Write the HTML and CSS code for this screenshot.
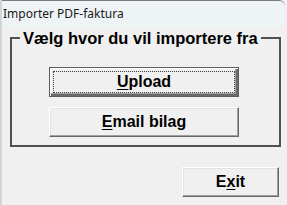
FILE: index.html
```html
<!DOCTYPE html>
<html>
<head>
<meta charset="utf-8">
<link rel="stylesheet" href="styles.css">
</head>
<body>
<div class="window">
  <div class="titlebar">Importer PDF-faktura</div>
  <div class="client">
    <fieldset class="group">
      <legend>Vælg hvor du vil importere fra</legend>
      <div class="actions">
        <button class="btn default"><span class="focus"><u>U</u>pload</span></button>
        <button class="btn"><span class="focus"><u>E</u>mail bilag</span></button>
      </div>
    </fieldset>
    <div class="footer">
      <button class="btn exit"><span class="focus">E<u>x</u>it</span></button>
    </div>
  </div>
</div>
</body>
</html>
```
FILE: styles.css
```css
html, body {
  margin: 0;
  padding: 0;
  background: #f0f0f0;
}
body {
  width: 287px;
  height: 205px;
  overflow: hidden;
}
.window {
  width: 285px;
  height: 205px;
  border-left: 2px solid #d4d4d4;
  box-sizing: border-box;
  background: #f0f0f0;
  display: flex;
  flex-direction: column;
}
.titlebar {
  height: 27px;
  box-sizing: border-box;
  background: #eef4f6;
  border-top: 1px solid #7a7a7a;
  border-top-right-radius: 6px;
  font-family: "Noto Sans", "Open Sans", sans-serif;
  font-size: 12px;
  line-height: 26px;
  padding-left: 1px;
  color: #1a1a1a;
}
.client {
  display: flex;
  flex-direction: column;
}
.group {
  margin: 2px 0 0 8px;
  width: 271px;
  box-sizing: border-box;
  border: 2px solid #505050;
  padding: 0 8px 8px 8px;
  min-width: 0;
}
.group legend {
  font-family: "Liberation Sans", Arial, sans-serif;
  font-weight: bold;
  font-size: 16.5px;
  line-height: 18px;
  padding: 0 3px;
  color: #000;
}
.actions {
  display: flex;
  flex-direction: column;
  align-items: center;
  gap: 10px;
  padding-top: 20px;
  padding-right: 3px;
}
.btn {
  width: 190px;
  height: 30px;
  box-sizing: border-box;
  margin: 0;
  padding: 3px;
  background: #f0f0f0;
  border: 1px solid;
  border-color: #ffffff #696969 #696969 #ffffff;
  box-shadow: inset -1px -1px 0 #a0a0a0, inset 1px 1px 0 #e3e3e3;
  font-family: "Liberation Sans", Arial, sans-serif;
  font-weight: bold;
  font-size: 16px;
  color: #000;
  display: flex;
}
.btn .focus {
  flex: 1;
  display: flex;
  align-items: center;
  justify-content: center;
  border: 1px dotted transparent;
}
.btn u {
  text-decoration-thickness: 1px;
  text-underline-offset: 2px;
}
.btn.default {
  border: 1px solid #5c5c5c;
  box-shadow: inset 1px 1px 0 #ffffff, inset -2px -2px 0 #6a6a6a, inset -3px -3px 0 #a0a0a0;
}
.btn.default .focus {
  border-color: #3a3a3a;
}
.footer {
  display: flex;
  justify-content: flex-end;
  padding: 20px 6px 0 0;
}
.btn.exit {
  width: 97px;
  height: 30px;
}
```
